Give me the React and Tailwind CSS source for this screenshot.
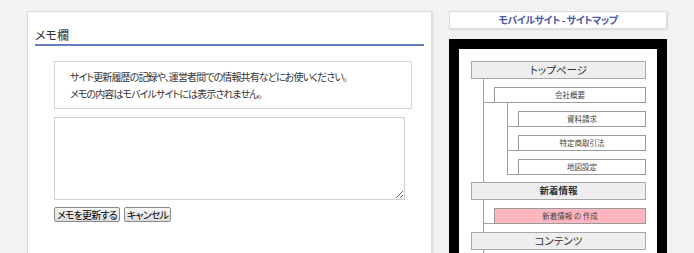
import React from "react";

const jp = { fontFamily: '"Noto Sans CJK JP", "Noto Sans", sans-serif', fontFeatureSettings: '"palt"' };

const TopBox = ({ label, bold }) => (
  <div
    className={`h-[18px] bg-[#eeeeee] border border-[#a8a8a8] flex items-center justify-center text-[#333] leading-none ${
      bold ? "font-bold text-[9.5px]" : "text-[10.5px]"
    }`}
  >
    {label}
  </div>
);

const ChildBox = ({ label, pink }) => (
  <div
    className={`h-[16px] flex-1 border border-[#9a9a9a] flex items-center justify-center text-[7.5px] text-[#444] leading-none ${
      pink ? "bg-[#ffb6c1]" : "bg-white"
    }`}
  >
    {label}
  </div>
);

// 横の枝線（行の上から16px目）
const Branch = ({ w }) => (
  <div className={`${w} h-[16px] flex items-end shrink-0`}>
    <div className="h-px w-full bg-[#a0a0a0]" />
  </div>
);

const Section = ({ label, bold, children, pb }) => (
  <div>
    <TopBox label={label} bold={bold} />
    <div className="flex">
      <div className="ml-[12px] w-px bg-[#a0a0a0] shrink-0" />
      <div className={`flex-1 ${pb}`}>{children}</div>
    </div>
  </div>
);

const Row = ({ label, pink, sub }) => (
  <div className="flex pt-2">
    <Branch w="w-[10px]" />
    <div className="flex-1 flex flex-col">
      <div className="flex">
        <ChildBox label={label} pink={pink} />
      </div>
      {sub && (
        <div className="ml-[13px]">
          {sub.map((s, i) => (
            <div key={s} className="flex">
              <div className={`w-px bg-[#a0a0a0] shrink-0 ${i < sub.length - 1 ? "self-stretch" : "h-[24px]"}`} />
              <div className="flex-1 flex pt-2">
                <Branch w="w-[10px]" />
                <ChildBox label={s} />
              </div>
            </div>
          ))}
        </div>
      )}
    </div>
  </div>
);

export default function App() {
  return (
    <div className="w-[694px] h-[253px] overflow-hidden bg-[#f2f2f2] flex items-start pt-[11px]" style={jp}>
      {/* メモ欄 */}
      <div className="ml-[27px] w-[405px] h-[260px] bg-white border border-[#dcdcdc] shadow-[1px_1px_2px_rgba(0,0,0,0.12)] pt-[15px] px-[7px]">
        <div className="h-[16px] leading-[16px] text-[12px] text-[#333] border-b-2 border-[#6a7cc0] box-content pb-[1px]">
          メモ欄
        </div>
        <div className="ml-[19px] mr-[12px] mt-[15px]">
          <div className="border border-[#d6d6d6] pl-[15px] py-[6px] text-[10px] tracking-[-0.9px] leading-[17px] text-[#333]">
            <p>サイト更新履歴の記録や、運営者間での情報共有などにお使いください。</p>
            <p>メモの内容はモバイルサイトには表示されません。</p>
          </div>
          <textarea className="block mt-[8px] w-[351px] h-[83px] border border-[#cfcfcf] bg-white outline-none" />
          <div className="flex gap-[4px] mt-[7px]">
            <button className="h-[15px] px-[2px] border border-[#8a8a8a] rounded-[2px] bg-gradient-to-b from-[#f7f7f7] to-[#dcdcdc] text-[10px] tracking-[-0.8px] leading-[13px] text-black">
              メモを更新する
            </button>
            <button className="h-[15px] px-[2px] border border-[#8a8a8a] rounded-[2px] bg-gradient-to-b from-[#f7f7f7] to-[#dcdcdc] text-[10px] tracking-[-0.8px] leading-[13px] text-black">
              キャンセル
            </button>
          </div>
        </div>
      </div>

      {/* サイトマップ */}
      <div className="ml-[17px] w-[218px] flex flex-col">
        <div className="h-[18px] bg-white border border-[#dcdcdc] shadow-[1px_1px_2px_rgba(0,0,0,0.1)] flex items-center justify-center text-[10px] tracking-[-0.5px] font-bold text-[#4a5aa8] leading-none">
          モバイルサイト - サイトマップ
        </div>
        <div className="mt-[10px] border-[10px] border-black bg-white h-[230px] pt-[12px] pl-[12px] pr-[11px]">
          <Section label="トップページ" pb="pb-[7px]">
            <Row label="会社概要" sub={["資料請求", "特定商取引法", "地図設定"]} />
          </Section>
          <Section label="新着情報" bold pb="pb-2">
            <Row label="新着情報 の 作成" pink />
          </Section>
          <Section label="コンテンツ" pb="pb-8" />
        </div>
      </div>
    </div>
  );
}
